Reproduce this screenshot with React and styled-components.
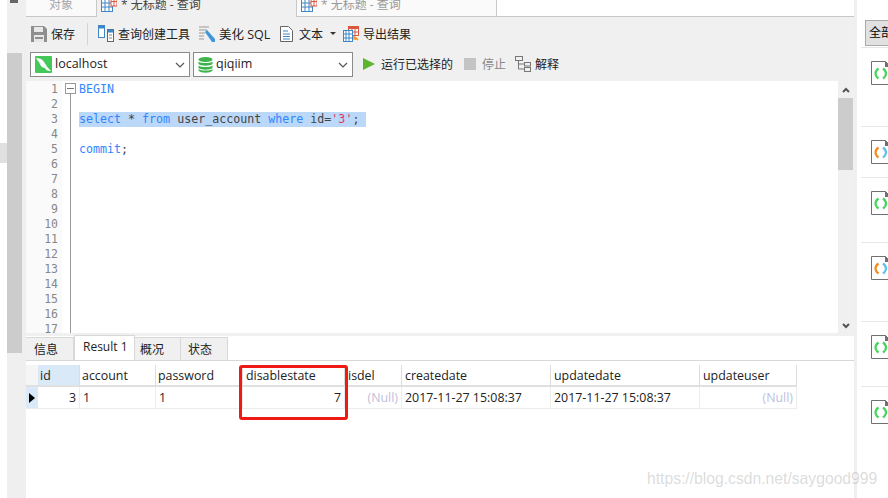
import React from 'react';
import styled, { createGlobalStyle } from 'styled-components';

const UI_FONT = `"Open Sans", "Noto Sans CJK SC", sans-serif`;

const GlobalStyle = createGlobalStyle`
    html, body {
        margin: 0;
        padding: 0;
        background: #fff;
    }
    #root {
        width: 888px;
        height: 498px;
        overflow: hidden;
    }
`;

const columns = [
    { name: 'id', width: 42, active: true, value: '3', right: true, pad: 2 },
    { name: 'account', width: 76, value: '1', pad: 2 },
    { name: 'password', width: 87, value: '1', pad: 2 },
    { name: 'disablestate', width: 102, value: '7', right: true, pad: 3 },
    { name: 'isdel', width: 57, value: '(Null)', right: true, nil: true, pad: 3 },
    { name: 'createdate', width: 149, value: '2017-11-27 15:08:37', pad: 3 },
    { name: 'updatedate', width: 149, value: '2017-11-27 15:08:37', pad: 3 },
    { name: 'updateuser', width: 97, value: '(Null)', right: true, nil: true, pad: 3 },
];

const sideItems = [
    { height: 79, rainbow: false },
    { height: 51, rainbow: true },
    { height: 65, rainbow: false },
    { height: 79, rainbow: true },
    { height: 65, rainbow: false },
    { height: 80, rainbow: false },
];

const TableIcon = () => (
    <svg width="16" height="16" viewBox="0 0 16 16">
        <rect x="0.5" y="2.5" width="11" height="12" fill="#fff" stroke="#3f86c6" />
        <path d="M0 6h12M0 10h12M4 2v13M8 2v13" stroke="#3f86c6" />
        <rect x="10" y="0" width="6" height="9" fill="#fff" stroke="#d9573f" />
        <path d="M10 4.5h6M13 0v9" stroke="#d9573f" />
    </svg>
);

const SaveIcon = () => (
    <svg width="16" height="16" viewBox="0 0 16 16">
        <path d="M0 0h13l3 3v13H0z" fill="#8f8f8f" />
        <rect x="3" y="1" width="9" height="5" fill="#e8e8e8" />
        <rect x="3" y="9" width="10" height="7" fill="#e8e8e8" />
        <rect x="4" y="11" width="8" height="2" fill="#8f8f8f" />
    </svg>
);

const BuilderIcon = () => (
    <svg width="16" height="17" viewBox="0 0 16 17">
        <rect x="0.5" y="0.5" width="6" height="12" fill="#fff" stroke="#3f86c6" />
        <rect x="0.5" y="0.5" width="6" height="3" fill="#3f86c6" />
        <rect x="9.5" y="4.5" width="6" height="12" fill="#fff" stroke="#666" />
        <rect x="9.5" y="4.5" width="6" height="3" fill="#3f86c6" />
        <path d="M11 10h3M11 13h3" stroke="#888" />
    </svg>
);

const BeautifyIcon = () => (
    <svg width="16" height="17" viewBox="0 0 16 17">
        <path d="M0 2h10M0 5h8M0 8h6M0 11h5M0 14h5" stroke="#999" />
        <path d="M6 7l2-2 8 9v3h-3z" fill="#3f96d8" />
    </svg>
);

const PageIcon = () => (
    <svg width="13" height="16" viewBox="0 0 13 16">
        <path d="M.5.5h8l4 4v11H.5z" fill="#fff" stroke="#666" />
        <path d="M3 5h5M3 8h7M3 10.500h7M3 13h7" stroke="#3f86c6" />
    </svg>
);

const ExportIcon = () => (
    <svg width="16" height="16" viewBox="0 0 16 16">
        <rect x="5.500" y="0.500" width="10" height="9" fill="#fff" stroke="#d9573f" />
        <rect x="5" y="0" width="11" height="3" fill="#d9573f" />
        <path d="M9 3v6M12 3v6M6 6h9" stroke="#d9573f" />
        <rect x="0.500" y="4.500" width="9" height="11" fill="#fff" stroke="#3f86c6" />
        <path d="M0 8h10M0 12h10M3 4v12M6 4v12" stroke="#3f86c6" />
        <path d="M11 10v3h3M12 11l3 3" stroke="#f29222" strokeWidth="1.500" fill="none" />
    </svg>
);

const ConnectionIcon = () => (
    <svg width="17" height="17" viewBox="0 0 17 17">
        <rect width="17" height="17" rx="1" fill="#45c85a" />
        <path d="M1 2c4 0 6 1 8 4s3 5 7 9c-4 0-5-1-6-3-3 0-5-3-6-6-1-1-2-2-3-4z" fill="#fff" />
    </svg>
);

const DatabaseIcon = () => (
    <svg width="15" height="16" viewBox="0 0 15 16">
        <ellipse cx="7.500" cy="2.500" rx="7" ry="2.500" fill="#3cb44a" />
        <path d="M.5 4.500c2 2 12 2 14 0v2.500c-2 2.200-12 2.200-14 0zM.5 8.500c2 2 12 2 14 0V11c-2 2.200-12 2.200-14 0zM.5 12c2 2 12 2 14 0v1.500c-2 3-12 3-14 0z" fill="#3cb44a" />
    </svg>
);

const ExplainIcon = () => (
    <svg width="16" height="16" viewBox="0 0 16 16" fill="none" stroke="#777">
        <rect x="0.500" y="0.500" width="7" height="4" />
        <rect x="9.500" y="6.500" width="6" height="3.500" />
        <rect x="9.500" y="11.500" width="6" height="4" />
        <path d="M3.500 5v8h6M3.500 8h6" />
    </svg>
);

const Chevron = () => (
    <svg width="10" height="6" viewBox="0 0 10 6" fill="none" stroke="#555" strokeWidth="1.200">
        <path d="M1 1l4 4 4-4" />
    </svg>
);

const ScrollArrow = ({ up }) => (
    <svg width="8" height="6" viewBox="0 0 8 6" fill="none" stroke="#555" strokeWidth="2">
        <path d={up ? 'M1 5l3-3 3 3' : 'M1 1l3 3 3-3'} />
    </svg>
);

const FileIcon = ({ rainbow }) => (
    <svg width="20" height="24" viewBox="0 0 20 24">
        <path d="M.5.500h14l5 5v18H.5z" fill="#fff" stroke="#707070" />
        <path d="M14 0l6 6h-6z" fill="#707070" />
        <path d="M7.500 7.500c-4 3-4 7 0 10" fill="none" strokeWidth="2.200" stroke={rainbow ? '#f58a1f' : '#45d65f'} />
        <path d="M12 7.500c4 3 4 7 0 10" fill="none" strokeWidth="2.200" stroke={rainbow ? '#5cc4ea' : '#45d65f'} />
    </svg>
);

export default function App() {
    const lines = Array.from({ length: 17 }, (_, i) => i + 1);

    return (
        <>
            <GlobalStyle />
            <Page>
                <LeftEdge>
                    <EdgeMark />
                </LeftEdge>
                <Rail>
                    <Pin />
                    <RailThumb />
                </Rail>
                <Main>
                    <TabBar>
                        <DocTab $width={71}>
                            <FadedText $indent={23}>对象</FadedText>
                        </DocTab>
                        <DocTab $width={200} $active>
                            <TableIcon />
                            <DocTitle>* 无标题 - 查询</DocTitle>
                        </DocTab>
                        <DocTab $width={200}>
                            <TableIcon />
                            <DocTitle $faded>* 无标题 - 查询</DocTitle>
                        </DocTab>
                    </TabBar>

                    <ToolRow>
                        <ToolButton $width={61}><SaveIcon /><span>保存</span></ToolButton>
                        <ToolSep />
                        <ToolButton $width={101}><BuilderIcon /><span>查询创建工具</span></ToolButton>
                        <ToolButton $width={81}><BeautifyIcon /><SqlLabel>美化 SQL</SqlLabel></ToolButton>
                        <ToolButton $width={63} $gap={6}>
                            <PageIcon /><span>文本</span><Caret />
                        </ToolButton>
                        <ToolButton><ExportIcon /><span>导出结果</span></ToolButton>
                    </ToolRow>

                    <RunRow>
                        <PickBox>
                            <ConnectionIcon /><PickText>localhost</PickText><Chevron />
                        </PickBox>
                        <PickBox>
                            <DatabaseIcon /><PickText>qiqiim</PickText><Chevron />
                        </PickBox>
                        <RunGroup>
                            <RunButton $width={101}><PlayShape /><span>运行已选择的</span></RunButton>
                            <RunButton $width={51} $disabled><StopShape /><span>停止</span></RunButton>
                            <RunButton $gap={4}><ExplainIcon /><span>解释</span></RunButton>
                        </RunGroup>
                    </RunRow>

                    <Editor>
                        <Gutter>
                            {lines.map(n => <LineNo key={n}>{n}</LineNo>)}
                        </Gutter>
                        <FoldColumn>
                            <FoldBox />
                            <FoldLine />
                        </FoldColumn>
                        <Code>
                            <CodeLine><Kw>BEGIN</Kw></CodeLine>
                            <CodeLine />
                            <CodeLine $selected>
                                <Kw>select</Kw> * <Kw>from</Kw> user_account <Kw>where</Kw> id=<Str>'3'</Str>;
                            </CodeLine>
                            <CodeLine />
                            <CodeLine><Kw>commit</Kw>;</CodeLine>
                        </Code>
                        <ScrollBar>
                            <ScrollButton><ScrollArrow up /></ScrollButton>
                            <ScrollThumb />
                            <ScrollButton $bottom><ScrollArrow /></ScrollButton>
                        </ScrollBar>
                    </Editor>

                    <ResultTabs>
                        <ResultTab $width={48} $pad={8}>信息</ResultTab>
                        <ResultTab $width={61} $pad={8} $active>Result 1</ResultTab>
                        <ResultTab $width={46} $pad={5}>概况</ResultTab>
                        <ResultTab $width={47} $pad={7}>状态</ResultTab>
                    </ResultTabs>

                    <ResultPane>
                        <Grid>
                            <HeadCorner />
                            {columns.map(c => (
                                <HeadCell key={c.name} $pad={c.pad} $active={c.active}>{c.name}</HeadCell>
                            ))}
                            <RowMarker><MarkerArrow /></RowMarker>
                            {columns.map(c => (
                                <DataCell key={c.name} $right={c.right} $nil={c.nil}>{c.value}</DataCell>
                            ))}
                        </Grid>
                        <RedBox />
                    </ResultPane>
                </Main>
                <SideGap />
                <Side>
                    <AllButton>全部</AllButton>
                    {sideItems.map((item, i) => (
                        <SideItem key={i} $height={item.height}>
                            <FileIcon rainbow={item.rainbow} />
                        </SideItem>
                    ))}
                </Side>
                <Watermark>https://blog.csdn.net/saygood999</Watermark>
            </Page>
        </>
    );
}

const Page = styled.div`
    position: relative;
    display: flex;
    width: 888px;
    height: 498px;
    overflow: hidden;
    background: #fff;
    font-family: ${UI_FONT};
    font-size: 12px;
    color: #222;
`;
const LeftEdge = styled.div`
    width: 7px;
    flex: none;
    padding-top: 143px;
    box-sizing: border-box;
`;
const EdgeMark = styled.div`
    height: 20px;
    background: #e0e0e0;
`;
const Rail = styled.div`
    width: 19px;
    flex: none;
    background: #efefef;
`;
const Pin = styled.div`
    width: 8px;
    height: 3px;
    margin-left: 3px;
    background: #666;
`;
const RailThumb = styled.div`
    width: 15px;
    height: 300px;
    margin-top: 50px;
    background: #cccccc;
`;
const Main = styled.div`
    width: 828px;
    flex: none;
    display: flex;
    flex-direction: column;
`;
const TabBar = styled.div`
    display: flex;
    height: 17px;
    flex: none;
    box-sizing: border-box;
    border-bottom: 1px solid #c8c8c8;
`;
const DocTab = styled.div`
    display: flex;
    align-items: flex-start;
    gap: 4px;
    width: ${props => props.$width}px;
    height: ${props => (props.$active ? 17 : 16)}px;
    box-sizing: border-box;
    padding-left: 4px;
    background: ${props => (props.$active ? '#f0f0f0' : '#fafafa')};
    border-right: 1px solid #c8c8c8;
    overflow: hidden;
    svg {
        margin-top: -3px;
        flex: none;
    }
`;
const FadedText = styled.span`
    margin-left: ${props => props.$indent - 4}px;
    line-height: 9px;
    color: #a8a8a8;
`;
const DocTitle = styled.span`
    line-height: 9px;
    color: ${props => (props.$faded ? '#999' : '#444')};
`;
const ToolRow = styled.div`
    display: flex;
    align-items: center;
    height: 35px;
    flex: none;
    box-sizing: border-box;
    padding: 0 0 2px 5px;
    background: #f0f0f0;
`;
const ToolButton = styled.div`
    display: flex;
    align-items: center;
    gap: ${props => props.$gap || 4}px;
    flex: none;
    ${props => props.$width && `width: ${props.$width}px;`}
    span {
        white-space: nowrap;
    }
`;
const SqlLabel = styled.span`
    font-size: 12.500px;
`;
const ToolSep = styled.div`
    width: 1px;
    height: 22px;
    margin: 0 10px 0 -5px;
    background: #d4d4d4;
`;
const Caret = styled.i`
    width: 0;
    height: 0;
    margin-left: 1px;
    border-left: 3px solid transparent;
    border-right: 3px solid transparent;
    border-top: 3px solid #333;
`;
const RunRow = styled.div`
    display: flex;
    align-items: center;
    gap: 3px;
    height: 29px;
    flex: none;
    padding: 0 0 4px 4px;
    box-sizing: border-box;
    background: #f0f0f0;
`;
const PickBox = styled.div`
    display: flex;
    align-items: center;
    gap: 3px;
    width: 160px;
    height: 25px;
    box-sizing: border-box;
    padding: 0 4px 0 4px;
    background: #fff;
    border: 1px solid #8a8a8a;
`;
const PickText = styled.span`
    flex: 1;
    margin-top: -2px;
    font-size: 12.500px;
`;
const RunGroup = styled.div`
    display: flex;
    align-items: center;
    margin-left: 7px;
    margin-top: -2px;
`;
const RunButton = styled.div`
    display: flex;
    align-items: center;
    gap: ${props => props.$gap || 6}px;
    flex: none;
    ${props => props.$width && `width: ${props.$width}px;`}
    color: ${props => (props.$disabled ? '#888' : '#222')};
    span {
        white-space: nowrap;
    }
`;
const PlayShape = styled.i`
    width: 0;
    height: 0;
    border-top: 6px solid transparent;
    border-bottom: 6px solid transparent;
    border-left: 12px solid #5cb531;
`;
const StopShape = styled.i`
    width: 12px;
    height: 12px;
    background: #c4c4c4;
`;
const Editor = styled.div`
    display: flex;
    height: 252px;
    flex: none;
    overflow: hidden;
    background: #fff;
`;
const Gutter = styled.div`
    width: 36px;
    flex: none;
    box-sizing: border-box;
    padding: 1px 4px 0 0;
    background: #fafafa;
`;
const LineNo = styled.div`
    height: 15px;
    line-height: 15px;
    text-align: right;
    font-family: "DejaVu Sans Mono", monospace;
    font-size: 11.500px;
    color: #888;
`;
const FoldColumn = styled.div`
    display: flex;
    flex-direction: column;
    align-items: center;
    width: 11px;
    flex: none;
    margin-left: 3px;
    padding-top: 2px;
`;
const FoldBox = styled.div`
    position: relative;
    width: 11px;
    height: 11px;
    box-sizing: border-box;
    border: 1px solid #999;
    &::after {
        content: '';
        position: absolute;
        left: 1px;
        right: 1px;
        top: 4px;
        height: 1px;
        background: #777;
    }
`;
const FoldLine = styled.div`
    width: 1px;
    flex: 1;
    background: #999;
`;
const Code = styled.div`
    flex: 1;
    padding: 1px 0 0 3px;
    font-family: "DejaVu Sans Mono", monospace;
    font-size: 11.650px;
    color: #444;
`;
const CodeLine = styled.div`
    width: 287px;
    height: 15px;
    line-height: 15px;
    white-space: pre;
    background: ${props => (props.$selected ? '#bcd8f8' : 'transparent')};
`;
const Kw = styled.span`
    color: #2f86ff;
`;
const Str = styled.span`
    color: #e2336b;
`;
const ScrollBar = styled.div`
    display: flex;
    flex-direction: column;
    width: 16px;
    flex: none;
    background: #f0f0f0;
`;
const ScrollButton = styled.div`
    display: flex;
    align-items: center;
    justify-content: center;
    height: 17px;
    ${props => props.$bottom && 'margin-top: auto; margin-bottom: -1px;'}
`;
const ScrollThumb = styled.div`
    width: 15px;
    height: 72px;
    background: #cccccc;
`;
const ResultTabs = styled.div`
    display: flex;
    align-items: flex-end;
    height: 28px;
    flex: none;
    box-sizing: border-box;
    padding-top: 2px;
    background: linear-gradient(#f0f0f0 0 3px, #fff 3px);
    border-bottom: 1px solid #d8d8d8;
`;
const ResultTab = styled.div`
    display: flex;
    align-items: center;
    width: ${props => props.$width}px;
    height: ${props => (props.$active ? 25 : 23)}px;
    box-sizing: border-box;
    padding-left: ${props => props.$pad}px;
    white-space: nowrap;
    background: ${props => (props.$active ? '#fff' : '#f0f0f0')};
    border: 1px solid #d8d8d8;
    border-bottom: none;
    border-left: none;
    ${props => props.$active && 'border-left: 1px solid #d8d8d8; padding-bottom: 4px;'}
`;
const ResultPane = styled.div`
    position: relative;
    flex: 1;
    padding-top: 4px;
    background: #fff;
`;
const Grid = styled.div`
    display: grid;
    grid-template-columns: 12px ${columns.map(c => `${c.width}px`).join(' ')};
    grid-auto-rows: 22px;
    width: 771px;
    font-size: 12.400px;
`;
const HeadCorner = styled.div`
    background: #f5f5f5;
    border-bottom: 2px solid #e0e0e0;
`;
const HeadCell = styled.div`
    box-sizing: border-box;
    padding-left: ${props => props.$pad}px;
    line-height: 21px;
    white-space: nowrap;
    overflow: hidden;
    background: ${props => (props.$active ? '#d9e9f8' : '#fff')};
    border-right: 1px solid #dcdcdc;
    border-bottom: 2px solid #e0e0e0;
`;
const RowMarker = styled.div`
    display: flex;
    align-items: center;
    padding-left: 3px;
    background: #d9e9f8;
    border-bottom: 1px solid #ececec;
`;
const MarkerArrow = styled.i`
    width: 0;
    height: 0;
    border-top: 5px solid transparent;
    border-bottom: 5px solid transparent;
    border-left: 6px solid #000;
`;
const DataCell = styled.div`
    box-sizing: border-box;
    padding: 0 3px;
    line-height: 21px;
    white-space: nowrap;
    text-align: ${props => (props.$right ? 'right' : 'left')};
    color: ${props => (props.$nil ? '#c0c0dc' : '#222')};
    border-right: 1px solid #ececec;
    border-bottom: 1px solid #ececec;
`;
const RedBox = styled.div`
    position: absolute;
    left: 213px;
    top: 4px;
    width: 109px;
    height: 55px;
    box-sizing: border-box;
    border: 3px solid #f01a14;
    border-radius: 3px;
`;
const SideGap = styled.div`
    width: 3px;
    flex: none;
    background: #efefef;
`;
const Side = styled.div`
    flex: 1;
    min-width: 0;
    overflow: hidden;
    padding-top: 20px;
`;
const AllButton = styled.div`
    width: 40px;
    height: 26px;
    box-sizing: border-box;
    margin-left: 8px;
    padding-left: 3px;
    line-height: 23px;
    white-space: nowrap;
    background: #e1e1e1;
    border: 1px solid #aaa;
    font-size: 12px;
    color: #000;
`;
const SideItem = styled.div`
    height: ${props => props.$height}px;
    box-sizing: border-box;
    margin: 1px 0 -1px 4px;
    padding: 13px 0 0 10px;
    border-top: 1px solid #e6e6e6;
    svg {
        display: block;
    }
`;
const Watermark = styled.div`
    position: absolute;
    left: 647px;
    top: 469px;
    font-family: "Liberation Sans", sans-serif;
    font-size: 15.700px;
    line-height: 20px;
    color: rgba(170, 170, 170, 0.42);
    white-space: nowrap;
`;
